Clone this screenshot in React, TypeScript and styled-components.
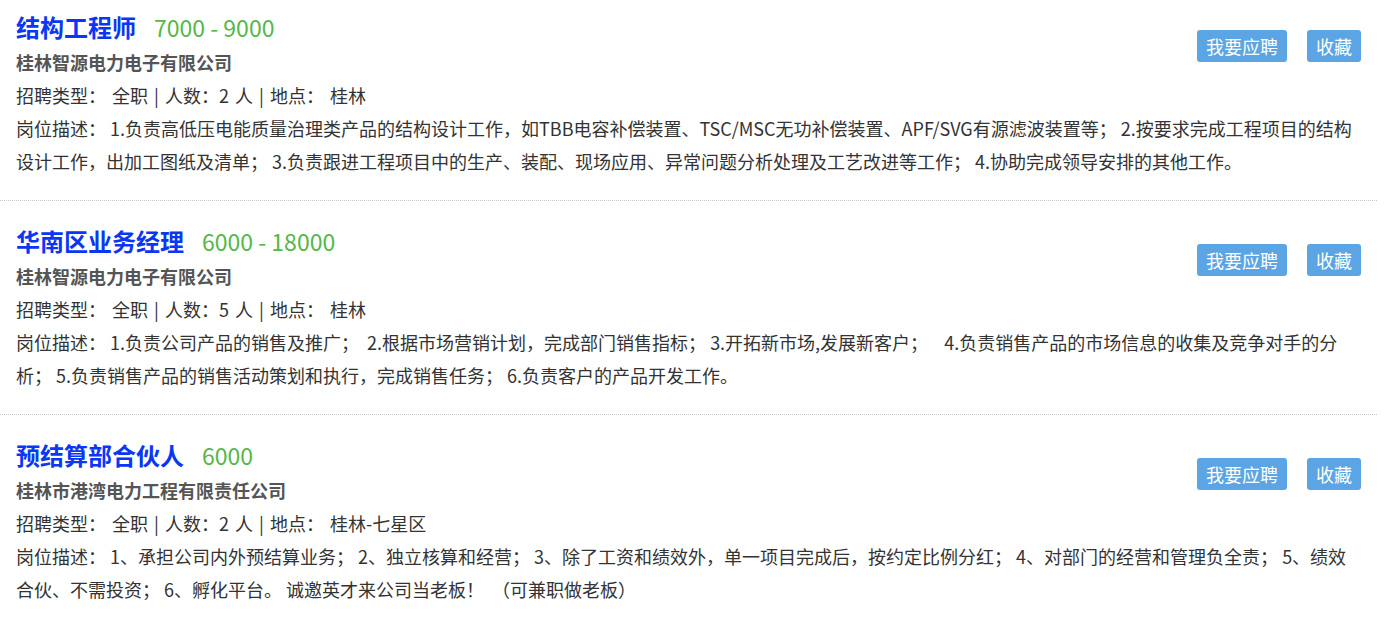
import React from "react";
import styled, { createGlobalStyle } from "styled-components";

const GlobalStyle = createGlobalStyle`
  html, body {
    margin: 0;
    padding: 0;
    background: #ffffff;
    overflow: hidden;
  }
  body {
    font-family: "Noto Sans CJK SC", "Noto Sans", sans-serif;
  }
`;

const List = styled.div`
  width: 1377px;
  display: flex;
  flex-direction: column;
`;

const Card = styled.div`
  display: flex;
  flex-direction: column;
  padding: 20px 16px 22px 16px;
  border-bottom: 1px dotted #c8c8c8;
  color: #333333;
  font-size: 18px;
  &:first-child {
    padding-top: 7px;
  }
`;

const Head = styled.div`
  display: flex;
  align-items: flex-start;
  justify-content: space-between;
  gap: 20px;
`;

const HeadText = styled.div`
  display: flex;
  flex-direction: column;
`;

const TitleRow = styled.div`
  display: flex;
  align-items: center;
  height: 40px;
`;

const Title = styled.span`
  font-size: 24px;
  font-weight: 700;
  color: #0a36f5;
  line-height: 40px;
`;

const Salary = styled.span`
  margin-left: 18px;
  font-size: 23px;
  color: #52b848;
  line-height: 40px;
`;

const Company = styled.div`
  font-size: 18px;
  font-weight: 700;
  color: #555555;
  line-height: 30px;
`;

const Meta = styled.div`
  margin-top: 2px;
  line-height: 33px;
  word-spacing: 2px;
`;

const Desc = styled.div`
  line-height: 33px;
`;

const Actions = styled.div`
  display: flex;
  gap: 20px;
  margin-top: 23px;
  flex-shrink: 0;
`;

const Button = styled.button`
  height: 32px;
  padding: 0 9px;
  border: none;
  border-radius: 3px;
  background: #5ba5e5;
  color: #ffffff;
  font-family: "Noto Sans CJK SC", sans-serif;
  font-size: 18px;
  line-height: 32px;
  cursor: pointer;
`;

type Job = {
  title: string;
  salary: string;
  company: string;
  count: string;
  place: string;
  desc: string;
};

const jobs: Job[] = [
  {
    title: "结构工程师",
    salary: "7000 - 9000",
    company: "桂林智源电力电子有限公司",
    count: "2",
    place: "桂林",
    desc:
      "1.负责高低压电能质量治理类产品的结构设计工作，如TBB电容补偿装置、TSC/MSC无功补偿装置、APF/SVG有源滤波装置等； 2.按要求完成工程项目的结构设计工作，出加工图纸及清单； 3.负责跟进工程项目中的生产、装配、现场应用、异常问题分析处理及工艺改进等工作； 4.协助完成领导安排的其他工作。",
  },
  {
    title: "华南区业务经理",
    salary: "6000 - 18000",
    company: "桂林智源电力电子有限公司",
    count: "5",
    place: "桂林",
    desc:
      "1.负责公司产品的销售及推广；\u00a0 2.根据市场营销计划，完成部门销售指标； 3.开拓新市场,发展新客户；\u00a0\u00a0\u00a0 4.负责销售产品的市场信息的收集及竞争对手的分析； 5.负责销售产品的销售活动策划和执行，完成销售任务； 6.负责客户的产品开发工作。",
  },
  {
    title: "预结算部合伙人",
    salary: "6000",
    company: "桂林市港湾电力工程有限责任公司",
    count: "2",
    place: "桂林-七星区",
    desc:
      "1、承担公司内外预结算业务； 2、独立核算和经营； 3、除了工资和绩效外，单一项目完成后，按约定比例分红； 4、对部门的经营和管理负全责； 5、绩效合伙、不需投资； 6、孵化平台。 诚邀英才来公司当老板！\u00a0\u00a0（可兼职做老板）",
  },
];

export default function App() {
  return (
    <>
      <GlobalStyle />
      <List>
        {jobs.map((job) => (
          <Card key={job.title}>
            <Head>
              <HeadText>
                <TitleRow>
                  <Title>{job.title}</Title>
                  <Salary>{job.salary}</Salary>
                </TitleRow>
                <Company>{job.company}</Company>
                <Meta>
                  招聘类型：&nbsp;全职 | 人数：{job.count} 人 | 地点：&nbsp;{job.place}
                </Meta>
              </HeadText>
              <Actions>
                <Button>我要应聘</Button>
                <Button>收藏</Button>
              </Actions>
            </Head>
            <Desc>岗位描述：&nbsp;{job.desc}</Desc>
          </Card>
        ))}
      </List>
    </>
  );
}
